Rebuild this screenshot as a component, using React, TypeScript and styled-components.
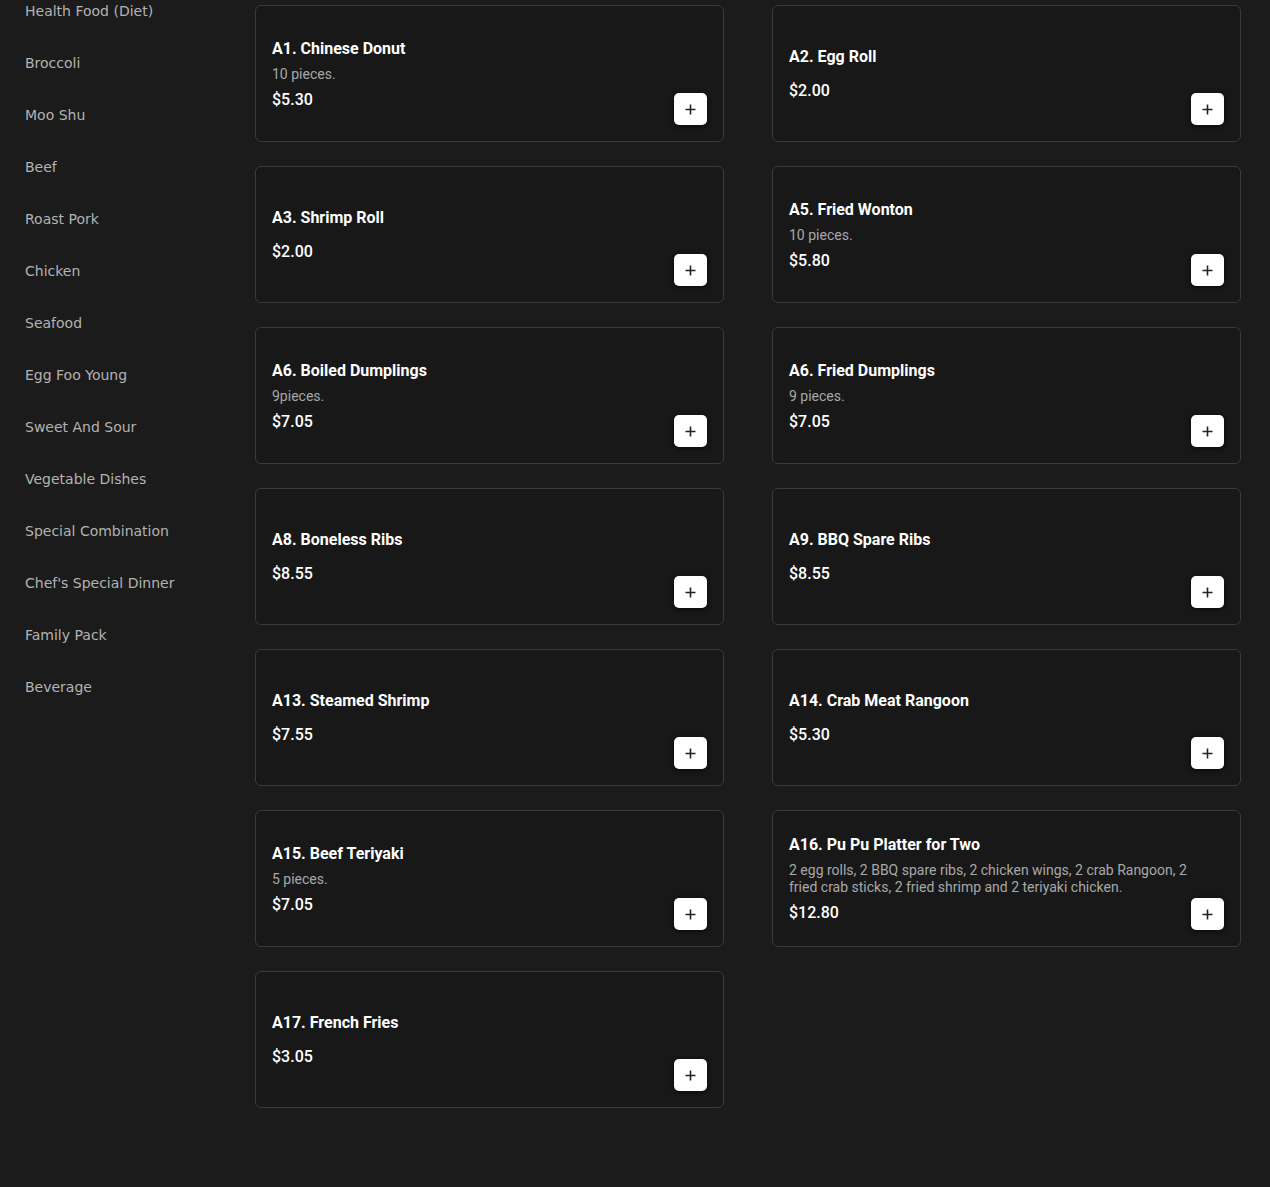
import React from "react";
import styled, { createGlobalStyle } from "styled-components";

const Global = createGlobalStyle`
  html, body {
    margin: 0;
    padding: 0;
    background: #1b1b1b;
  }
  * { box-sizing: border-box; }
`;

const Page = styled.div`
  display: flex;
  min-height: 1187px;
  background: #1b1b1b;
  overflow: hidden;
`;

const Sidebar = styled.nav`
  width: 255px;
  flex-shrink: 0;
  padding-left: 25px;
  margin-top: -15px;
  display: flex;
  flex-direction: column;
`;

const NavItem = styled.a`
  display: block;
  padding: 17px 0;
  line-height: 18px;
  font-family: "DejaVu Sans", sans-serif;
  font-size: 14px;
  color: #b3b3b3;
  text-decoration: none;
  cursor: pointer;
`;

const Main = styled.main`
  flex: 1;
  padding: 5px 29px 0 0;
  display: grid;
  grid-template-columns: 469px 469px;
  column-gap: 48px;
  row-gap: 24px;
  align-content: start;
`;

const Card = styled.div`
  position: relative;
  height: 137px;
  background: #181818;
  border: 1px solid #3b3b3b;
  border-radius: 6px;
  padding: 1px 24px 0 16px;
  display: flex;
  flex-direction: column;
  justify-content: center;
  font-family: Roboto, "Liberation Sans", sans-serif;
`;

const Title = styled.div<{ $hasDesc: boolean }>`
  font-size: 16px;
  font-weight: 700;
  line-height: 24px;
  color: #ffffff;
  margin-bottom: ${(p) => (p.$hasDesc ? "5px" : "10px")};
`;

const Desc = styled.div`
  font-size: 14px;
  line-height: 17px;
  color: #a8a8a8;
  margin-bottom: 5px;
`;

const Price = styled.div`
  font-size: 16px;
  font-weight: 500;
  line-height: 24px;
  color: #ffffff;
`;

const AddButton = styled.button`
  position: absolute;
  right: 16px;
  bottom: 16px;
  width: 33px;
  height: 32px;
  border: none;
  border-radius: 5px;
  background: #ffffff;
  box-shadow: 0 1px 5px rgba(0, 0, 0, 0.7);
  display: flex;
  align-items: center;
  justify-content: center;
  padding: 0;
  cursor: pointer;
`;

type Item = { name: string; desc?: string; price: string };

const categories = [
  "Health Food (Diet)",
  "Broccoli",
  "Moo Shu",
  "Beef",
  "Roast Pork",
  "Chicken",
  "Seafood",
  "Egg Foo Young",
  "Sweet And Sour",
  "Vegetable Dishes",
  "Special Combination",
  "Chef's Special Dinner",
  "Family Pack",
  "Beverage",
];

const items: Item[] = [
  { name: "A1. Chinese Donut", desc: "10 pieces.", price: "$5.30" },
  { name: "A2. Egg Roll", price: "$2.00" },
  { name: "A3. Shrimp Roll", price: "$2.00" },
  { name: "A5. Fried Wonton", desc: "10 pieces.", price: "$5.80" },
  { name: "A6. Boiled Dumplings", desc: "9pieces.", price: "$7.05" },
  { name: "A6. Fried Dumplings", desc: "9 pieces.", price: "$7.05" },
  { name: "A8. Boneless Ribs", price: "$8.55" },
  { name: "A9. BBQ Spare Ribs", price: "$8.55" },
  { name: "A13. Steamed Shrimp", price: "$7.55" },
  { name: "A14. Crab Meat Rangoon", price: "$5.30" },
  { name: "A15. Beef Teriyaki", desc: "5 pieces.", price: "$7.05" },
  {
    name: "A16. Pu Pu Platter for Two",
    desc: "2 egg rolls, 2 BBQ spare ribs, 2 chicken wings, 2 crab Rangoon, 2 fried crab sticks, 2 fried shrimp and 2 teriyaki chicken.",
    price: "$12.80",
  },
  { name: "A17. French Fries", price: "$3.05" },
];

const PlusIcon = () => (
  <svg width="11" height="11" viewBox="0 0 11 11">
    <path d="M5.5 0.5v10M0.5 5.5h10" stroke="#222" strokeWidth="1.6" />
  </svg>
);

export default function App() {
  return (
    <Page>
      <Global />
      <Sidebar>
        {categories.map((c) => (
          <NavItem key={c}>{c}</NavItem>
        ))}
      </Sidebar>
      <Main>
        {items.map((it) => (
          <Card key={it.name}>
            <Title $hasDesc={!!it.desc}>{it.name}</Title>
            {it.desc && <Desc>{it.desc}</Desc>}
            <Price>{it.price}</Price>
            <AddButton aria-label="Add">
              <PlusIcon />
            </AddButton>
          </Card>
        ))}
      </Main>
    </Page>
  );
}
